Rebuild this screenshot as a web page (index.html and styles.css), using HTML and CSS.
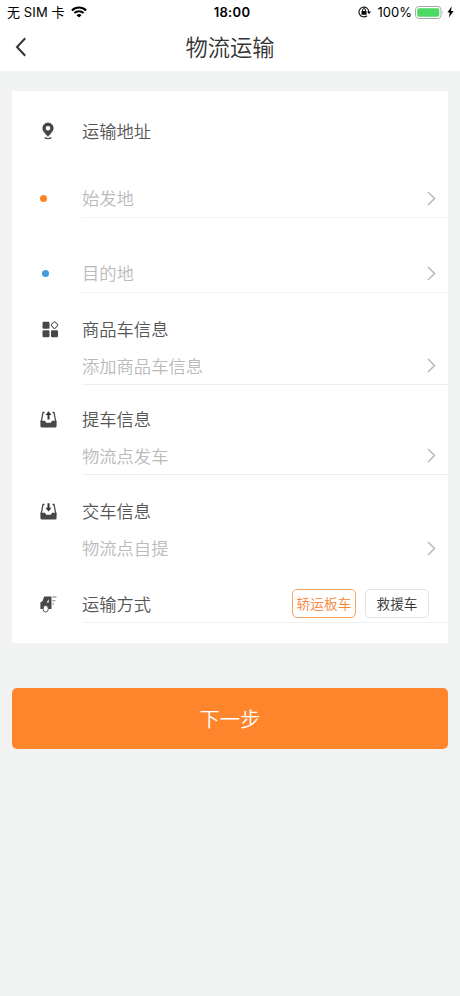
FILE: index.html
```html
<!DOCTYPE html>
<html lang="zh-CN">
<head>
<meta charset="utf-8">
<title>物流运输</title>
<link rel="stylesheet" href="styles.css">
</head>
<body>
<header class="top">
  <div class="status">
    <div class="status-left">
      <span>无 SIM 卡</span>
      <svg class="wifi" width="16" height="12" viewBox="0 0 16 12"><g fill="none" stroke="#000" stroke-width="2.1"><path d="M.9 4.4a10.2 10.2 0 0 1 14.2 0"/><path d="M3.4 7.1a6.6 6.6 0 0 1 9.2 0"/></g><path d="M5.5 9.2a3.6 3.6 0 0 1 5 0L8 11.6z"/></svg>
    </div>
    <div class="time">18:00</div>
    <div class="status-right">
      <svg width="13" height="12" viewBox="0 0 13 12"><path d="M10.8 6A4.9 4.9 0 1 0 9 9.8" fill="none" stroke="#111" stroke-width="1.1"/><path d="M9 5.5h4L11 8z"/><rect x="3.5" y="5.1" width="5" height="3.6" rx=".5"/><path d="M4.5 5.3V4.1a1.5 1.5 0 0 1 3 0v1.2" fill="none" stroke="#111"/></svg>
      <span class="percent">100%</span>
      <svg class="battery" width="29" height="13" viewBox="0 0 29 13"><rect x=".5" y=".5" width="25.5" height="12" rx="3.2" fill="#fff" stroke="#a5a9a6"/><rect x="2.2" y="2.2" width="22.1" height="8.6" rx="1.7" fill="#4cd964"/><path d="M27.4 4.3q1.4 2.2 0 4.4z" fill="#a5a9a6"/></svg>
      <svg class="bolt" width="7" height="12" viewBox="0 0 7 12"><path d="M4.7.3.4 6.6h2.4L1.9 11.5 6.6 5H4z"/></svg>
    </div>
  </div>
  <nav class="nav">
    <svg class="back" width="12" height="20" viewBox="0 0 12 20"><path d="M10.2 1.2 2 10l8.2 8.8" fill="none" stroke="#333" stroke-width="2"/></svg>
    <h1 class="title">物流运输</h1>
  </nav>
</header>
<main class="page">
  <section class="card">
    <div class="row address">
      <div class="icon"><svg class="pin" width="12" height="18" viewBox="0 0 12 18"><path fill-rule="evenodd" d="M6 .5a5.6 5.6 0 0 0-5.6 5.6C.4 9.5 3.8 12 6 15c2.2-3 5.6-5.5 5.6-8.9A5.6 5.6 0 0 0 6 .5zm0 3.4a2.3 2.3 0 1 1 0 4.6 2.3 2.3 0 0 1 0-4.6z" fill="#45484b"/><path d="M2.6 15.600q3.400 2 6.800 0" fill="none" stroke="#45484b" stroke-width="1.300"/></svg></div>
      <div class="body">运输地址</div>
    </div>
    <div class="row origin">
      <div class="icon"><i class="dot orange"></i></div>
      <div class="body hint line"><span>始发地</span><svg class="arrow" width="9" height="15" viewBox="0 0 9 15"><path d="m1 1 6.500 6.500L1 14"/></svg></div>
    </div>
    <div class="row destination">
      <div class="icon"><i class="dot blue"></i></div>
      <div class="body hint line"><span>目的地</span><svg class="arrow" width="9" height="15" viewBox="0 0 9 15"><path d="m1 1 6.500 6.500L1 14"/></svg></div>
    </div>
    <div class="row goods">
      <div class="icon"><svg class="blocks" width="17" height="17" viewBox="0 0 17 17"><g fill="#45484b"><rect x=".5" y=".7" width="7" height="7" rx="1.200"/><rect x=".5" y="9.200" width="7" height="7" rx="1.200"/><rect x="9" y="9.200" width="7" height="7" rx="1.200"/></g><rect x="9.900" y="1.500" width="5.200" height="5.200" rx="1" transform="rotate(45 12.500 4.100)" fill="none" stroke="#55585b"/></svg></div>
      <div class="body">商品车信息</div>
      <div class="body hint line"><span>添加商品车信息</span><svg class="arrow" width="9" height="15" viewBox="0 0 9 15"><path d="m1 1 6.500 6.500L1 14"/></svg></div>
    </div>
    <div class="row pickup">
      <div class="icon"><svg class="tray" width="17" height="17" viewBox="0 0 17 17"><path d="M4.500 1.500H3L1.200 11M12.500 1.500H14L15.800 11" fill="none" stroke="#45484b" stroke-width="1.300"/><path d="M.4 9.800h4.500l1.300 2h4.600l1.300-2h4.500v5.300q0 1.500-1.500 1.500H1.900q-1.500 0-1.500-1.500z" fill="#45484b"/><path d="M8.500.3 11.500 4H9.500v4.500h-2V4h-2z" fill="#333"/></svg></div>
      <div class="body">提车信息</div>
      <div class="body hint line"><span>物流点发车</span><svg class="arrow" width="9" height="15" viewBox="0 0 9 15"><path d="m1 1 6.500 6.500L1 14"/></svg></div>
    </div>
    <div class="row delivery">
      <div class="icon"><svg class="tray" width="17" height="17" viewBox="0 0 17 17"><path d="M4.500 1.500H3L1.200 11M12.500 1.500H14L15.800 11" fill="none" stroke="#45484b" stroke-width="1.300"/><path d="M.4 9.800h4.500l1.300 2h4.600l1.300-2h4.500v5.300q0 1.500-1.500 1.500H1.900q-1.500 0-1.500-1.500z" fill="#45484b"/><path d="M8.500 8.500 11.500 4.800h-2V.3h-2v4.500h-2z" fill="#333"/></svg></div>
      <div class="body">交车信息</div>
      <div class="body hint"><span>物流点自提</span><svg class="arrow" width="9" height="15" viewBox="0 0 9 15"><path d="m1 1 6.500 6.500L1 14"/></svg></div>
    </div>
    <div class="row mode">
      <div class="icon"><svg class="truck" width="17" height="17" viewBox="0 0 17 17"><path fill-rule="evenodd" d="M4.200.6h7.300v12.300H.4V6.600L2.600 5zM8.700 3.200 6.600 6.400h2.100z" fill="#45484b"/><ellipse cx="5.700" cy="12.800" rx="2.600" ry="3.300" fill="#fff" stroke="#55585b"/><path d="M12.500 1h4M12.500 4.700h2.800M12.500 8h1.500" stroke="#777a7d" stroke-width="1.100"/></svg></div>
      <div class="body line"><span>运输方式</span><div class="options"><button class="option selected">轿运板车</button><button class="option">救援车</button></div></div>
    </div>
  </section>
  <button class="next">下一步</button>
</main>
</body>
</html>
```
FILE: styles.css
```css
* { box-sizing: border-box; }
body {
  margin: 0;
  min-height: 996px;
  background: #f1f3f3;
  color: #555;
  font-family: "Noto Sans CJK SC", sans-serif;
  font-weight: 350;
}
svg { display: block; flex: none; }
button { font: inherit; padding: 0; }
.top { height: 71px; background: #fff; }
.status {
  display: grid;
  grid-template-columns: 1fr auto 1fr;
  align-items: center;
  height: 24px;
  padding: 0 6px 0 7px;
  color: #000;
  font: 400 13px/24px Inter, "Noto Sans CJK SC", sans-serif;
}
.status-left, .status-right { display: flex; align-items: center; white-space: nowrap; }
.status-right { justify-content: flex-end; }
.status-left { letter-spacing: .1px; }
.wifi { margin-left: 6px; }
.time { padding-left: 3px; font-weight: 600; letter-spacing: .3px; }
.percent { margin: 0 3px 0 7px; }
.bolt { margin-left: 3px; }
.nav {
  display: grid;
  grid-template-columns: 15px 1fr 15px;
  align-items: center;
  height: 46px;
}
.back { justify-self: end; width: 12px; margin-right: -12px; }
.title { margin: 0; padding-bottom: 2px; text-align: center; color: #333; font-size: 22.3px; font-weight: 350; line-height: 44px; }
.page { padding: 20px 12px 0; }
.card { height: 551.5px; background: #fff; }
.row {
  display: grid;
  grid-template-columns: 70px 1fr;
  font-size: 17.3px;
}
.icon { display: flex; align-items: center; }
.body {
  grid-column: 2;
  display: flex;
  align-items: center;
  justify-content: space-between;
  height: 37px;
  padding-bottom: 1px;
  line-height: 28px;
}
.hint { color: #bababa; }
.line { border-bottom: 1px solid #eee; }
.arrow { margin-right: 12px; fill: none; stroke: #bbb; stroke-width: 1.6; }
.address .body { height: 80px; padding-bottom: 0; }
.origin { padding-top: 9px; }
.destination { padding-top: 37px; }
.origin .body, .destination .body { height: 38px; }
.origin .line, .destination .line { border-color: #f3f3f3; }
.goods { padding-top: 18px; }
.pickup { padding-top: 16px; }
.delivery { padding-top: 18px; }
.mode { padding-top: 19px; }
.mode .line { border-color: #f1f1f1; }
.pin { margin-left: 30px; }
.blocks { margin-left: 30px; }
.tray, .truck { margin-left: 28px; }
.dot { width: 7px; height: 7px; margin-bottom: 1px; border-radius: 50%; }
.orange { margin-left: 28px; background: #fa8426; }
.blue { margin-left: 30px; background: #429bdc; }
.options { display: flex; gap: 9px; margin-right: 19px; }
.option {
  width: 64px;
  height: 29px;
  padding-bottom: 1px;
  border: 1px solid #e2e2e2;
  border-radius: 5px;
  background: #fff;
  color: #333;
  font-size: 13.7px;
  line-height: 24px;
  white-space: nowrap;
}
.selected { border-color: #f6a262; color: #f78635; }
.next {
  display: block;
  width: 100%;
  height: 61.5px;
  margin-top: 45px;
  border: 0;
  border-radius: 5px;
  background: #ff852c;
  color: #fff;
  font-size: 20.3px;
}
```
